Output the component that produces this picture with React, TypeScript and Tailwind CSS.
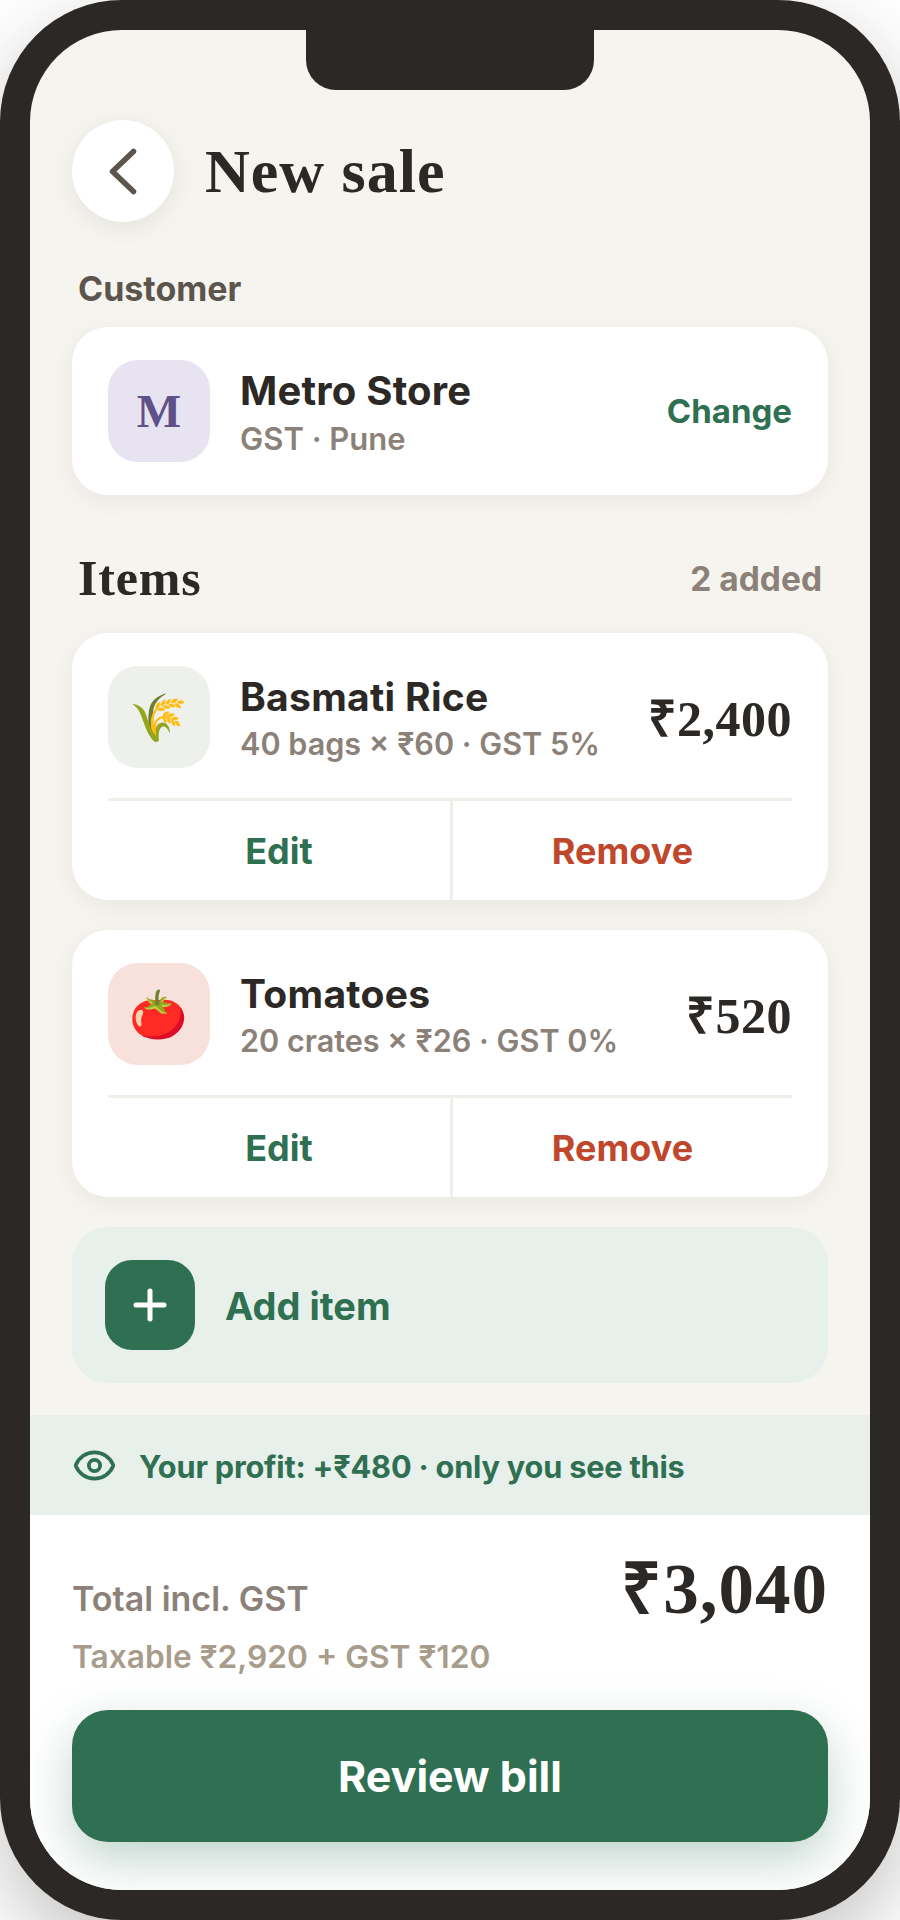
import { Eye, Plus } from "lucide-react";

const sans = "font-['Inter','Noto_Sans',sans-serif]";
const serif = "font-['Liberation_Serif',serif]";

type Item = {
  emoji: string;
  tileClass: string;
  name: string;
  detail: string;
  price: string;
};

const items: Item[] = [
  {
    emoji: "🌾",
    tileClass: "bg-[#eef0ec]",
    name: "Basmati Rice",
    detail: "40 bags × ₹60 · GST 5%",
    price: "₹2,400",
  },
  {
    emoji: "🍅",
    tileClass: "bg-[#f8e1db]",
    name: "Tomatoes",
    detail: "20 crates × ₹26 · GST 0%",
    price: "₹520",
  },
];

function ItemCard({ item }: { item: Item }) {
  return (
    <div className="h-[267px] rounded-[36px] bg-white px-[36px] pt-[33px] shadow-[0_6px_24px_rgba(43,40,37,0.06)] flex flex-col">
      <div className="flex items-center h-[102px]">
        <div
          className={`w-[102px] h-[102px] rounded-[30px] flex items-center justify-center text-[47px] leading-none font-['Noto_Color_Emoji'] ${item.tileClass}`}
        >
          {item.emoji}
        </div>
        <div className="ml-[30px] flex-1 pt-[3px]">
          <div className="text-[39px] leading-[50px] font-bold tracking-[0.3px] text-[#2b2825]">
            {item.name}
          </div>
          <div className="mt-[1px] text-[30.6px] leading-[42px] font-semibold text-[#8b8178] whitespace-nowrap">
            {item.detail}
          </div>
        </div>
        <div className={`${serif} pt-[4px] text-[50px] tracking-[0.5px] font-bold text-[#2b2825]`}>
          {item.price}
        </div>
      </div>
      <div className="mt-[30px] border-t-[3px] border-[#efeee9] flex flex-1 -mb-px">
        <div className="w-[342px] flex items-center justify-center text-[36px] font-bold text-[#2f6f52]">
          Edit
        </div>
        <div className="flex-1 border-l-[3px] border-[#efeee9] flex items-center justify-center text-[36px] font-bold text-[#c0472b]">
          Remove
        </div>
      </div>
    </div>
  );
}

export default function App() {
  return (
    <div className={`w-[900px] h-[1920px] bg-white ${sans}`}>
      <div className="relative w-[900px] h-[1920px] rounded-[122px] bg-[#2b2825] p-[30px] shadow-[0_30px_80px_rgba(43,40,37,0.28)]">
        <div className="absolute left-[306px] top-[30px] w-[288px] h-[60px] rounded-b-[30px] bg-[#2b2825]" />
        <div className="w-[840px] h-[1860px] rounded-[92px] overflow-hidden bg-[#f6f4ef] flex flex-col">
          <div className="px-[42px] pt-[90px]">
            {/* header */}
            <div className="flex items-center">
              <div className="w-[102px] h-[102px] rounded-full bg-white shadow-[0_6px_24px_rgba(43,40,37,0.08)] flex items-center justify-center">
                <svg width="42" height="54" viewBox="0 0 42 54" fill="none">
                  <path
                    d="M31.5 7.5 L10.5 27.5 L31.5 47.5"
                    stroke="#5c554d"
                    strokeWidth="5.5"
                    strokeLinecap="round"
                    strokeLinejoin="round"
                  />
                </svg>
              </div>
              <h1 className={`${serif} ml-[31px] text-[62px] tracking-[1px] font-bold text-[#2b2825]`}>
                New sale
              </h1>
            </div>

            {/* customer */}
            <div className="mt-[48px] ml-[6px] h-[36px] leading-[38px] text-[34px] font-bold text-[#5c554d]">
              Customer
            </div>
            <div className="mt-[21px] h-[168px] rounded-[36px] bg-white px-[36px] shadow-[0_6px_24px_rgba(43,40,37,0.06)] flex items-center">
              <div className={`${serif} w-[102px] h-[102px] rounded-[30px] bg-[#e8e3f0] flex items-center justify-center text-[47px] font-bold text-[#5e5088]`}>
                M
              </div>
              <div className="ml-[30px] flex-1 pt-[2px]">
                <div className="text-[40px] leading-[52px] font-bold tracking-[0.2px] text-[#2b2825]">
                  Metro Store
                </div>
                <div className="text-[31px] leading-[43px] font-semibold text-[#8b8178]">
                  GST · Pune
                </div>
              </div>
              <div className="pt-[2px] text-[33px] font-bold text-[#2f6f52]">Change</div>
            </div>

            {/* items */}
            <div className="mt-[61px] mx-[6px] h-[44px] flex items-center justify-between">
              <div className={`${serif} text-[50px] tracking-[0.8px] font-bold text-[#2b2825]`}>Items</div>
              <div className="pt-[2px] text-[33.5px] font-bold text-[#8b8178]">2 added</div>
            </div>
            <div className="mt-[33px] flex flex-col gap-[30px]">
              {items.map((item) => (
                <ItemCard key={item.name} item={item} />
              ))}
              <div className="h-[156px] rounded-[36px] bg-[#e7f0ea] pl-[33px] flex items-center">
                <div className="w-[90px] h-[90px] rounded-[27px] bg-[#2f6f52] flex items-center justify-center">
                  <Plus size={48} color="#ffffff" strokeWidth={2.5} />
                </div>
                <div className="ml-[30px] pt-[2px] text-[38px] font-bold text-[#2f6f52]">
                  Add item
                </div>
              </div>
            </div>
          </div>

          {/* profit strip */}
          <div className="mt-[32px] h-[100px] bg-[#e7f0ea] pl-[42px] flex items-center">
            <Eye size={45} color="#2f6f52" strokeWidth={2} />
            <div className="ml-[22px] pt-[4px] text-[30.7px] font-bold tracking-[-0.2px] text-[#2f6f52]">
              Your profit: +₹480 · only you see this
            </div>
          </div>

          {/* footer */}
          <div className="flex-1 bg-white px-[42px]">
            <div className="flex justify-between h-[195px]">
              <div className="pt-[62px]">
                <div className="text-[34px] leading-[44px] font-semibold text-[#8b8178]">
                  Total incl. GST
                </div>
                <div className="mt-[14px] text-[31.7px] leading-[44px] font-semibold text-[#a89c8b]">
                  Taxable ₹2,920 + GST ₹120
                </div>
              </div>
              <div className={`${serif} pt-[33px] text-[71px] tracking-[1px] leading-[82px] font-bold text-[#2b2825]`}>
                ₹3,040
              </div>
            </div>
            <div className="h-[132px] rounded-[36px] bg-[#2f6f52] shadow-[0_18px_48px_rgba(47,111,82,0.3)] flex items-center justify-center text-[43px] font-bold text-white">
              Review bill
            </div>
          </div>
        </div>
      </div>
    </div>
  );
}
